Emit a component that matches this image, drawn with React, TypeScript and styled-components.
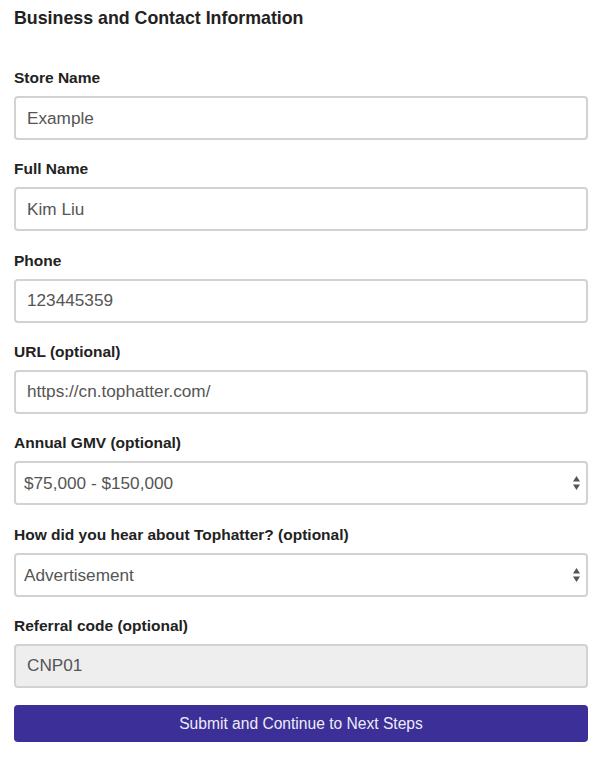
import React from "react";
import styled, { createGlobalStyle } from "styled-components";

const Global = createGlobalStyle`
  html, body { margin: 0; padding: 0; background: #ffffff; }
  body { font-family: "Liberation Sans", Arial, Helvetica, sans-serif; color: #222; }
  * { box-sizing: border-box; }
`;

const Page = styled.form`
  width: 599px;
  padding: 8px 11px 16px 14px;
  display: flex;
  flex-direction: column;
`;

const Title = styled.h2`
  margin: 0 0 41px 0;
  font-size: 17.8px;
  line-height: 20px;
  font-weight: 700;
  color: #222;
`;

const Field = styled.div`
  display: flex;
  flex-direction: column;
  gap: 9px;
  margin-bottom: 20.33px;
`;

const Label = styled.label`
  font-size: 15.5px;
  line-height: 18px;
  font-weight: 700;
  color: #222;
`;

const Input = styled.input<{ $disabled?: boolean }>`
  width: 100%;
  height: 44px;
  padding: 0 11px;
  border: 2px solid #d2d2d2;
  border-radius: 4px;
  font-family: "Liberation Sans", Arial, Helvetica, sans-serif;
  font-size: 17.2px;
  color: #555;
  background: ${(p) => (p.$disabled ? "#eeeeee" : "#ffffff")};
  outline: none;
`;

const SelectWrap = styled.div`
  position: relative;
  width: 100%;
`;

const Select = styled.select`
  width: 100%;
  height: 44px;
  padding: 0 30px 0 8px;
  border: 2px solid #d2d2d2;
  border-radius: 4px;
  font-family: "Liberation Sans", Arial, Helvetica, sans-serif;
  font-size: 17.2px;
  color: #555;
  background: #ffffff;
  appearance: none;
  -webkit-appearance: none;
  outline: none;
`;

const Arrows = styled.svg`
  position: absolute;
  right: 7px;
  top: 50%;
  transform: translateY(-50%);
  pointer-events: none;
`;

const Button = styled.button`
  margin-top: -3px;
  width: 100%;
  height: 37px;
  border: none;
  border-radius: 4px;
  background: #3c2f98;
  color: #ecebf7;
  font-family: "Liberation Sans", Arial, Helvetica, sans-serif;
  font-size: 15.6px;
  cursor: pointer;
`;

const UpDown = () => (
  <Arrows width="9" height="16" viewBox="0 0 9 16">
    <path d="M4.5 1 L8 6.5 L1 6.5 Z" fill="#555" />
    <path d="M4.5 15 L8 9.5 L1 9.5 Z" fill="#555" />
  </Arrows>
);

export default function App() {
  return (
    <>
      <Global />
      <Page onSubmit={(e) => e.preventDefault()}>
        <Title>Business and Contact Information</Title>
        <Field>
          <Label>Store Name</Label>
          <Input defaultValue="Example" />
        </Field>
        <Field>
          <Label>Full Name</Label>
          <Input defaultValue="Kim Liu" />
        </Field>
        <Field>
          <Label>Phone</Label>
          <Input defaultValue="123445359" />
        </Field>
        <Field>
          <Label>URL (optional)</Label>
          <Input defaultValue="https://cn.tophatter.com/" />
        </Field>
        <Field>
          <Label>Annual GMV (optional)</Label>
          <SelectWrap>
            <Select defaultValue="75-150">
              <option value="75-150">$75,000 - $150,000</option>
            </Select>
            <UpDown />
          </SelectWrap>
        </Field>
        <Field>
          <Label>How did you hear about Tophatter? (optional)</Label>
          <SelectWrap>
            <Select defaultValue="ad">
              <option value="ad">Advertisement</option>
            </Select>
            <UpDown />
          </SelectWrap>
        </Field>
        <Field>
          <Label>Referral code (optional)</Label>
          <Input $disabled defaultValue="CNP01" readOnly />
        </Field>
        <Button type="submit">Submit and Continue to Next Steps</Button>
      </Page>
    </>
  );
}
